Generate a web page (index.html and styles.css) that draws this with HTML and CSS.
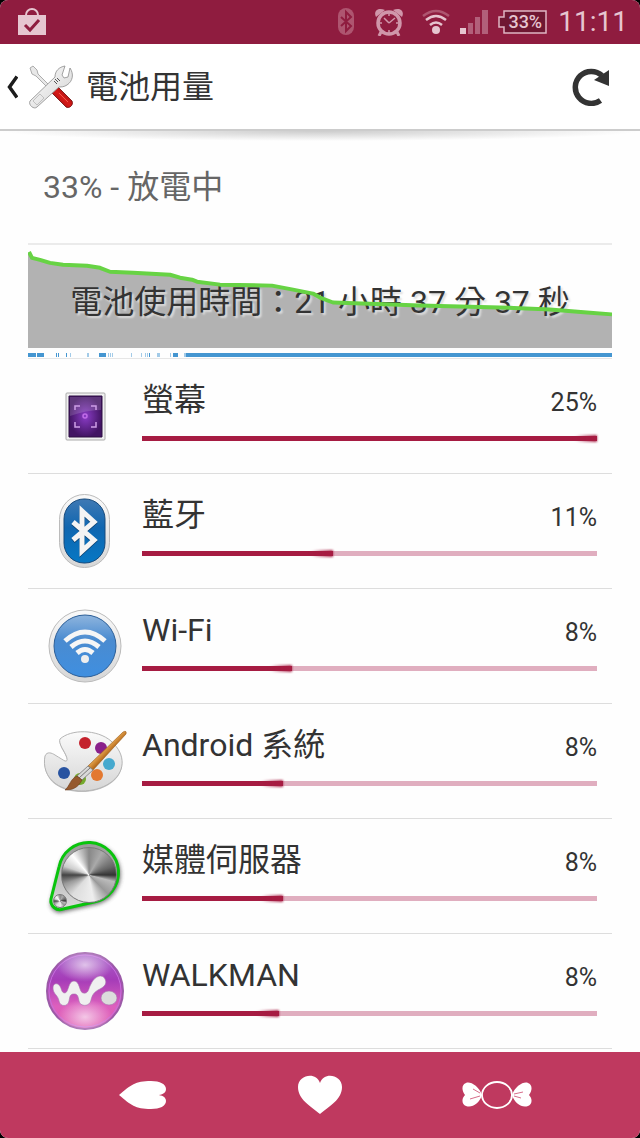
FILE: index.html
```html
<!DOCTYPE html>
<html lang="zh-Hant">
<head>
    <meta charset="UTF-8">
    <meta name="viewport" content="width=device-width, initial-scale=1">
    <title>電池用量</title>
    <link rel="stylesheet" href="styles.css">
</head>
<body>
<div class="screen">
    <div class="status">
        <svg class="bag" width="28" height="28" viewBox="0 0 28 28">
            <path d="M8 8V7a6 6 0 0 1 12 0v1" fill="none" stroke="#e6c5d0" stroke-width="2"/>
            <path d="M0 7h28v20H0z" fill="#e6c5d0"/>
            <path d="M7 17l5 5L21 12" fill="none" stroke="#8f1c3f" stroke-width="3"/>
        </svg>
        <svg width="28" height="28" viewBox="0 0 28 28">
            <rect x="4" y="0" width="16" height="27" rx="8" fill="#ae5570"/>
            <path d="M7 9l10 9-5 5V4l5 5-10 9" fill="none" stroke="#8f1c3f" stroke-width="2"/>
        </svg>
        <svg width="40" height="28" viewBox="0 0 40 28">
            <g fill="none" stroke="#d096aa">
                <circle cx="17" cy="15" r="11" stroke-width="3.500"/>
                <path d="M17 15l-5-5M17 15l6-5" stroke-width="1.500"/>
                <path d="M17 5v3M17 22v3M7 15h3M24 15h3" stroke-width="1.500"/>
                <path d="M9 24l-2 4M25 24l2 4" stroke-width="3"/>
            </g>
            <path d="M4 9C1 3 6-1 13 2zM30 9c3-6-2-10-9-7z" fill="#d096aa"/>
        </svg>
        <svg width="28" height="28" viewBox="0 0 28 28">
            <g fill="none" stroke-width="2.500">
                <path d="M1 8q13-10 26 0" stroke="#ae5570"/>
                <path d="M4 12q10-8 20 0M8 17q6-5 12 0" stroke="#e6c5d0"/>
            </g>
            <circle cx="14" cy="22" r="4" fill="#e6c5d0"/>
        </svg>
        <svg width="28" height="28" viewBox="0 0 28 28">
            <path d="M0 20h6v6H0z" fill="#e6c5d0"/>
            <path d="M8 15h5v11H8zM15 9h5v17h-5zM22 2h6v24h-6z" fill="#b25f7a"/>
        </svg>
        <span class="battery">
            <svg width="50" height="26" viewBox="0 0 50 26">
                <path d="M6 2h42v22H6v-6H1V8h5z" fill="#6f1732" stroke="#e0b5c3" stroke-width="1.500"/>
            </svg>
            <span>33%</span>
        </span>
        <span class="clock">11:11</span>
    </div>

    <header class="header">
        <a href="#" class="back" aria-label="返回">
            <svg width="12" height="24" viewBox="0 0 12 24">
                <path d="M11 1.500L3.500 12l7.500 10.500" fill="none" stroke="#1c1c1c" stroke-width="3.500"/>
            </svg>
            <svg width="44" height="44" viewBox="0 0 44 44">
                <defs>
                    <linearGradient id="steel" x1="0" y1="0" x2="1" y2="1">
                        <stop offset="0" stop-color="#fff"/>
                        <stop offset="1" stop-color="#d2d2d2"/>
                    </linearGradient>
                    <linearGradient id="handle" x1="0" y1="1" x2="1" y2="0">
                        <stop offset="0" stop-color="#7e0909"/>
                        <stop offset=".5" stop-color="#d81a18"/>
                        <stop offset="1" stop-color="#720808"/>
                    </linearGradient>
                </defs>
                <path d="M1 3l3-2 4 4 1 4 15 15-2 2L7 11 3 9z" fill="#e8e8e8" stroke="#999" stroke-width=".8"/>
                <path d="M23 28l6-6 14 14c2 4-3 8-6 6z" fill="url(#handle)" stroke="#6b0808" stroke-width=".8"/>
                <path d="M30 28l9 9" stroke="#f0594c" stroke-width="1"/>
                <path d="M26 12C26 6 30 2 36 1l-3 9 2 3 4-1 2-9c4 6 3 13-3 17-3 2-6 2-8 2L8 42c-3 3-9-2-7-6z" fill="url(#steel)" stroke="#8d8d8d" stroke-width=".8"/>
                <path d="M4 36l7-7 4 4-7 7z" fill="none" stroke="#b5b5b5" stroke-width=".8"/>
                <path d="M26 14l3 3M28 13l3 3M25 16l3 3" stroke="#555" stroke-width="1"/>
            </svg>
        </a>
        <h1>電池用量</h1>
        <button type="button" class="refresh" aria-label="重新整理">
            <svg width="38" height="38" viewBox="0 0 38 38">
                <path d="M30 7.500A16 16 0 1 0 28.500 32.500" fill="none" stroke="#333" stroke-width="5.500"/>
                <path d="M37 2v16L22 12z" fill="#333"/>
            </svg>
        </button>
    </header>

    <main class="content">
        <p class="summary">33% - 放電中</p>

        <a href="#" class="history">
            <svg viewBox="0 0 584 114" preserveAspectRatio="none">
                <path d="M0 7L4 13 12 15 22 18 35 20 59 21 72 23 82 27 105 28 142 30 152 33 164 35 169 37 192 40 244 41 265 45 285 49 292 53 305 58 392 61 472 63 522 65 559 68 584 70V104H0z" fill="#b2b2b2"/>
                <path d="M0 109h8v4H0zM9 109h7v4H9zM28 109h1v4h-1zM30 109h1v4h-1zM38 109h1v4h-1zM71 109h7v4h-7zM121 109h1v4h-1zM145 109h5v4h-5zM158 109h426v4H158z" fill="#4596d1"/>
                <path d="M42 109h1v4h-1zM59 109h2v4h-2zM80 109h1v4h-1zM82 109h1v4h-1zM84 109h1v4h-1zM103 109h1v4h-1zM113 109h1v4h-1zM117 109h1v4h-1zM119 109h1v4h-1zM129 109h3v4h-3zM142 109h1v4h-1zM156 109h2v4h-2z" fill="#a3cbe8"/>
            </svg>
            <span>電池使用時間：21 小時 37 分 37 秒</span>
            <svg viewBox="0 0 584 114" preserveAspectRatio="none">
                <path d="M1 7L4 13 12 15 22 18 35 20 59 21 72 23 82 27 105 28 142 30 152 33 164 35 169 37 192 40 244 41 265 45 285 49 292 53 305 58 392 61 472 63 522 65 559 68 584 70" fill="none" stroke="#67d344" stroke-width="4" stroke-linejoin="round"/>
            </svg>
        </a>

        <ul class="usage">
            <li>
                <svg class="icon" viewBox="0 0 96 96">
                    <defs>
                        <radialGradient id="violet">
                            <stop offset="0" stop-color="#8a3cc6"/>
                            <stop offset="1" stop-color="#421463"/>
                        </radialGradient>
                    </defs>
                    <rect x="29" y="25" width="39" height="47" rx="1" fill="#f0f0f0" stroke="#aaa"/>
                    <path d="M32 28h33v41H32z" fill="url(#violet)" stroke="#2c0f42"/>
                    <path d="M33 29h31v13q-15 0-31 6z" fill="#fff" opacity=".15"/>
                    <path d="M38 42v-4h5M54 38h5v4M59 54v5h-5M43 59h-5v-5" fill="none" stroke="#cd9fe6" stroke-width="1.500"/>
                    <circle cx="48" cy="48" r="2" fill="none" stroke="#c06ce8" stroke-width="1.500"/>
                </svg>
                <div class="info">
                    <div class="line"><span class="name">螢幕</span><span class="pct">25%</span></div>
                    <div class="bar"><div class="fill" style="width: 100%"></div></div>
                </div>
            </li>
            <li>
                <svg class="icon" viewBox="0 0 96 96">
                    <defs>
                        <linearGradient id="rim" x1="0" y1="0" x2="0" y2="1">
                            <stop offset="0" stop-color="#fafafa"/>
                            <stop offset="1" stop-color="#d6d6d6"/>
                        </linearGradient>
                        <linearGradient id="blue" x1="0" y1="0" x2="0" y2="1">
                            <stop offset="0" stop-color="#3f79b4"/>
                            <stop offset=".45" stop-color="#0f66b0"/>
                            <stop offset="1" stop-color="#0778c4"/>
                        </linearGradient>
                    </defs>
                    <rect x="22.500" y="11.500" width="50" height="73" rx="25" fill="url(#rim)" stroke="#bbb"/>
                    <rect x="27" y="16" width="41" height="64" rx="20" fill="url(#blue)" stroke="#174a7c"/>
                    <path d="M36 39l21 18-12 11V28l12 11-21 18" fill="none" stroke="#0a4070" stroke-width="5" transform="translate(0 1)"/>
                    <path d="M36 39l21 18-12 11V28l12 11-21 18" fill="none" stroke="#f4f4f4" stroke-width="5"/>
                </svg>
                <div class="info">
                    <div class="line"><span class="name">藍牙</span><span class="pct">11%</span></div>
                    <div class="bar"><div class="fill" style="width: 42%"></div></div>
                </div>
            </li>
            <li>
                <svg class="icon" viewBox="0 0 96 96">
                    <defs>
                        <linearGradient id="sky" x1="0" y1="0" x2="0" y2="1">
                            <stop offset="0" stop-color="#8fb5de"/>
                            <stop offset=".4" stop-color="#4a8bd0"/>
                            <stop offset="1" stop-color="#3f8fe0"/>
                        </linearGradient>
                    </defs>
                    <circle cx="48" cy="48" r="36" fill="url(#rim)" stroke="#bbb"/>
                    <circle cx="48" cy="48" r="31" fill="url(#sky)" stroke="#2d5f98"/>
                    <g fill="none" stroke="#f6f6f6" stroke-width="5">
                        <path d="M28 43q20-18 40 0M34 49q14-12 28 0M40 55q8-7 16 0"/>
                    </g>
                    <circle cx="48" cy="61" r="4" fill="#eee"/>
                </svg>
                <div class="info">
                    <div class="line"><span class="name">Wi-Fi</span><span class="pct">8%</span></div>
                    <div class="bar"><div class="fill" style="width: 33%"></div></div>
                </div>
            </li>
            <li>
                <svg class="icon" viewBox="0 0 96 96">
                    <defs>
                        <linearGradient id="wood" gradientUnits="userSpaceOnUse" x1="66" y1="36" x2="72" y2="42">
                            <stop offset="0" stop-color="#efb057"/>
                            <stop offset="1" stop-color="#a95b10"/>
                        </linearGradient>
                    </defs>
                    <path d="M23 26C34 16 60 16 74 28c16 14 14 32-1 42-16 11-41 10-54 1C9 64 6 53 8 43c2-5 7-3 10-1 5 3 8 5 10 6 5 1 0-8-3-13-2-4-3-7-2-9z" fill="#777" opacity=".45" transform="translate(0 1)"/>
                    <path d="M23 26C34 16 60 16 74 28c16 14 14 32-1 42-16 11-41 10-54 1C9 64 6 53 8 43c2-5 7-3 10-1 5 3 8 5 10 6 5 1 0-8-3-13-2-4-3-7-2-9z" fill="url(#rim)" stroke="#b5b5b5"/>
                    <circle cx="48" cy="30" r="6" fill="#c4222d"/>
                    <circle cx="64" cy="35" r="6" fill="#8a218b"/>
                    <circle cx="72" cy="51" r="6" fill="#46a9ce"/>
                    <circle cx="60" cy="62" r="6" fill="#e37830"/>
                    <circle cx="43" cy="66" r="6" fill="#75aa2d"/>
                    <circle cx="27" cy="60" r="6" fill="#2853a0"/>
                    <path d="M86 19q4-2 3 2L56 57l-5-4z" fill="url(#wood)" stroke="#9b5a17" stroke-width=".6"/>
                    <path d="M51 53l5 4-11 10-5-4z" fill="#d9d9d9" stroke="#777" stroke-width=".8"/>
                    <path d="M53 55L42 65" stroke="#777"/>
                    <path d="M40 63l5 4c-4 8-10 10-17 10 5-4 5-11 12-14z" fill="#96592d" stroke="#69391a" stroke-width=".6"/>
                </svg>
                <div class="info">
                    <div class="line"><span class="name">Android 系統</span><span class="pct">8%</span></div>
                    <div class="bar"><div class="fill" style="width: 31%"></div></div>
                </div>
            </li>
            <li>
                <svg class="icon" viewBox="0 0 96 96">
                    <defs>
                        <filter id="soft" x="-20%" y="-20%" width="140%" height="140%">
                            <feGaussianBlur stdDeviation="2"/>
                        </filter>
                        <linearGradient id="plate" x1="0" y1="0" x2="0" y2="1">
                            <stop offset="0" stop-color="#999"/>
                            <stop offset="1" stop-color="#ddd"/>
                        </linearGradient>
                    </defs>
                    <path d="M22 39A31 31 0 1 1 57 75L26 82A9 9 0 0 1 14 71z" fill="#444" opacity=".8" filter="url(#soft)" transform="translate(0 2)"/>
                    <path d="M22 39A30 30 0 1 1 57 74L26 81A9 9 0 0 1 14 71z" fill="url(#plate)" stroke="#09c40d" stroke-width="3"/>
                    <foreignObject x="24" y="19" width="56" height="56"><div class="knob"></div></foreignObject>
                    <foreignObject x="16" y="66" width="14" height="14"><div class="knob"></div></foreignObject>
                </svg>
                <div class="info">
                    <div class="line"><span class="name">媒體伺服器</span><span class="pct">8%</span></div>
                    <div class="bar"><div class="fill" style="width: 31%"></div></div>
                </div>
            </li>
            <li>
                <svg class="icon" viewBox="0 0 96 96">
                    <defs>
                        <linearGradient id="ball" x1="0" y1="0" x2="0" y2="1">
                            <stop offset="0" stop-color="#a764cb"/>
                            <stop offset=".35" stop-color="#a53cb8"/>
                            <stop offset=".7" stop-color="#dd60bd"/>
                            <stop offset="1" stop-color="#e05cb2"/>
                        </linearGradient>
                        <radialGradient id="shine">
                            <stop offset="0" stop-color="#fff" stop-opacity=".65"/>
                            <stop offset="1" stop-color="#fff" stop-opacity="0"/>
                        </radialGradient>
                    </defs>
                    <circle cx="48" cy="48" r="38" fill="url(#ball)" stroke="#9b5aa8" stroke-width="2"/>
                    <circle cx="48" cy="48" r="36" fill="none" stroke="#c66fdc" stroke-width="1"/>
                    <ellipse cx="48" cy="22" rx="28" ry="17" fill="url(#shine)"/>
                    <ellipse cx="48" cy="74" rx="27" ry="18" fill="url(#shine)"/>
                    <g fill="#f0f0f0" stroke="#a675ad" stroke-width=".6">
                        <path d="M16 45C16 40 20 40 22 42 25 45 24 50 28 50 32 49 31 38 37 38 43 38 42 49 46 50 52 51 51 46 54 41 58 32 66 31 68 36 71 42 65 45 61 47 56 50 55 53 54 57 53 64 43 64 42 58 41 52 40 51 37 51 33 51 33 53 32 58 31 64 23 64 22 58 21 52 16 51 16 45z"/>
                        <ellipse cx="72" cy="55" rx="8" ry="7" fill="#dcdcdc"/>
                    </g>
                </svg>
                <div class="info">
                    <div class="line"><span class="name">WALKMAN</span><span class="pct">8%</span></div>
                    <div class="bar"><div class="fill" style="width: 30%"></div></div>
                </div>
            </li>
        </ul>
    </main>

    <nav class="nav">
        <button type="button" aria-label="返回">
            <svg width="48" height="30" viewBox="0 0 48 30">
                <path d="M0 15C12 5 16 1 32 1c9 0 15 3 15 8 0 4-4 6-9 6 5 0 9 2 9 6 0 5-6 8-15 8C16 29 12 25 0 15z" fill="#fff"/>
            </svg>
        </button>
        <button type="button" aria-label="首頁">
            <svg width="44" height="40" viewBox="0 0 44 40">
                <path d="M22 39C12 31 0 24 0 12 0 0 18-4 22 8 26-4 44 0 44 12c0 12-12 19-22 27z" fill="#fff"/>
            </svg>
        </button>
        <button type="button" aria-label="最近使用">
            <svg width="70" height="30" viewBox="0 0 70 30">
                <path d="M20 15C17 6 8 1 4 3 0 4-1 10 3 15c-4 4-3 10 1 11 6 2 13-2 16-11zM50 15C53 6 62 1 66 3c4 1 5 7 1 12 4 4 3 10-1 11-6 2-13-2-16-11z" fill="#fff"/>
                <path d="M11 9l7 4M8 19l10-3M52 14l9-2M52 16l7 2" stroke="#d76c8a" stroke-width="1"/>
                <ellipse cx="35" cy="15" rx="15" ry="13" fill="#bf395f" stroke="#fff" stroke-width="1.800"/>
            </svg>
        </button>
    </nav>
</div>
</body>
</html>
```
FILE: styles.css
```css
* {
    margin: 0;
    padding: 0;
    box-sizing: border-box;
}

body {
    background-color: #000;
    color: #333;
    font-family: Roboto, "Noto Sans CJK TC", sans-serif;
    font-size: 32px;
    line-height: 40px;
}

svg {
    display: block;
    flex-shrink: 0;
}

a {
    color: inherit;
    text-decoration: none;
}

button {
    border: none;
    background: none;
    cursor: pointer;
}

.screen {
    display: flex;
    flex-direction: column;
    min-height: 100vh;
    background-color: #fefefe;
    border-radius: 8px;
    overflow: hidden;
}

/* status bar */
.status {
    display: flex;
    align-items: center;
    gap: 10px;
    height: 44px;
    padding: 0 12px 0 18px;
    background-color: #8f1c3f;
    color: #e6c5d0;
}

.status .bag {
    margin-right: auto;
}

.battery {
    display: grid;
    place-items: center;
}

.battery > * {
    grid-area: 1 / 1;
}

.battery span {
    padding-left: 4px;
    font-size: 18px;
    font-weight: 500;
    line-height: 26px;
}

.clock {
    font-size: 28px;
}

/* title bar */
.header {
    display: flex;
    align-items: center;
    gap: 13px;
    height: 87px;
    padding: 0 30px 0 6px;
    border-bottom: 2px solid #ccc;
    background-color: #fff;
}

.back {
    display: flex;
    align-items: center;
    gap: 11px;
}

.header h1 {
    flex: 1;
    font-size: 32px;
    font-weight: 400;
}

.content {
    flex: 1;
    padding: 0 28px;
    background: radial-gradient(ellipse 50% 10px at 50% 0, #ccc, transparent) no-repeat;
}

.summary {
    padding: 36px 15px;
    border-bottom: 2px solid #ebebeb;
    color: #666;
}

/* battery history chart */
.history {
    display: grid;
    height: 114px;
    border-bottom: 1px solid #e6e6e6;
}

.history > * {
    grid-area: 1 / 1;
    width: 100%;
    height: 113px;
}

.history span {
    padding-top: 37px;
    text-align: center;
    white-space: nowrap;
    text-shadow: 2px 2px 2px #ddd;
}

/* usage list */
.usage {
    list-style: none;
}

.usage li {
    display: flex;
    align-items: center;
    height: 115px;
    padding-right: 15px;
    border-bottom: 1px solid #ddd;
}

.icon {
    width: 96px;
    height: 96px;
    margin: 0 9px;
}

.info {
    flex: 1;
    height: 100%;
    padding-top: 21px;
}

.line {
    display: flex;
    justify-content: space-between;
    align-items: flex-end;
    height: 40px;
    margin-bottom: 16px;
}

.pct {
    font-size: 25px;
    line-height: 34px;
}

.bar {
    height: 5px;
    background-color: #e0aebf;
}

.fill {
    display: flex;
    justify-content: flex-end;
    align-items: center;
    height: 5px;
    background-color: #a61c42;
}

.fill::after {
    content: "";
    width: 24px;
    height: 7px;
    flex-shrink: 0;
    border-radius: 100% 2px 2px 100%;
    background: linear-gradient(to right, transparent, #a61c42);
    filter: blur(1px);
}

.knob {
    width: 100%;
    height: 100%;
    border: 1px solid #777;
    border-radius: 50%;
    background: conic-gradient(#888, #aaa 30deg, #666 70deg, #333 90deg, #bbb 105deg, #999 135deg, #eee 170deg, #ddd 220deg, #999 250deg, #444 270deg, #ccc 290deg, #fff 320deg, #888);
}

/* navigation bar */
.nav {
    display: flex;
    height: 86px;
    padding: 0 54px;
    background-color: #bf395f;
}

.nav button {
    display: flex;
    flex: 1;
    align-items: center;
    justify-content: center;
}
```
